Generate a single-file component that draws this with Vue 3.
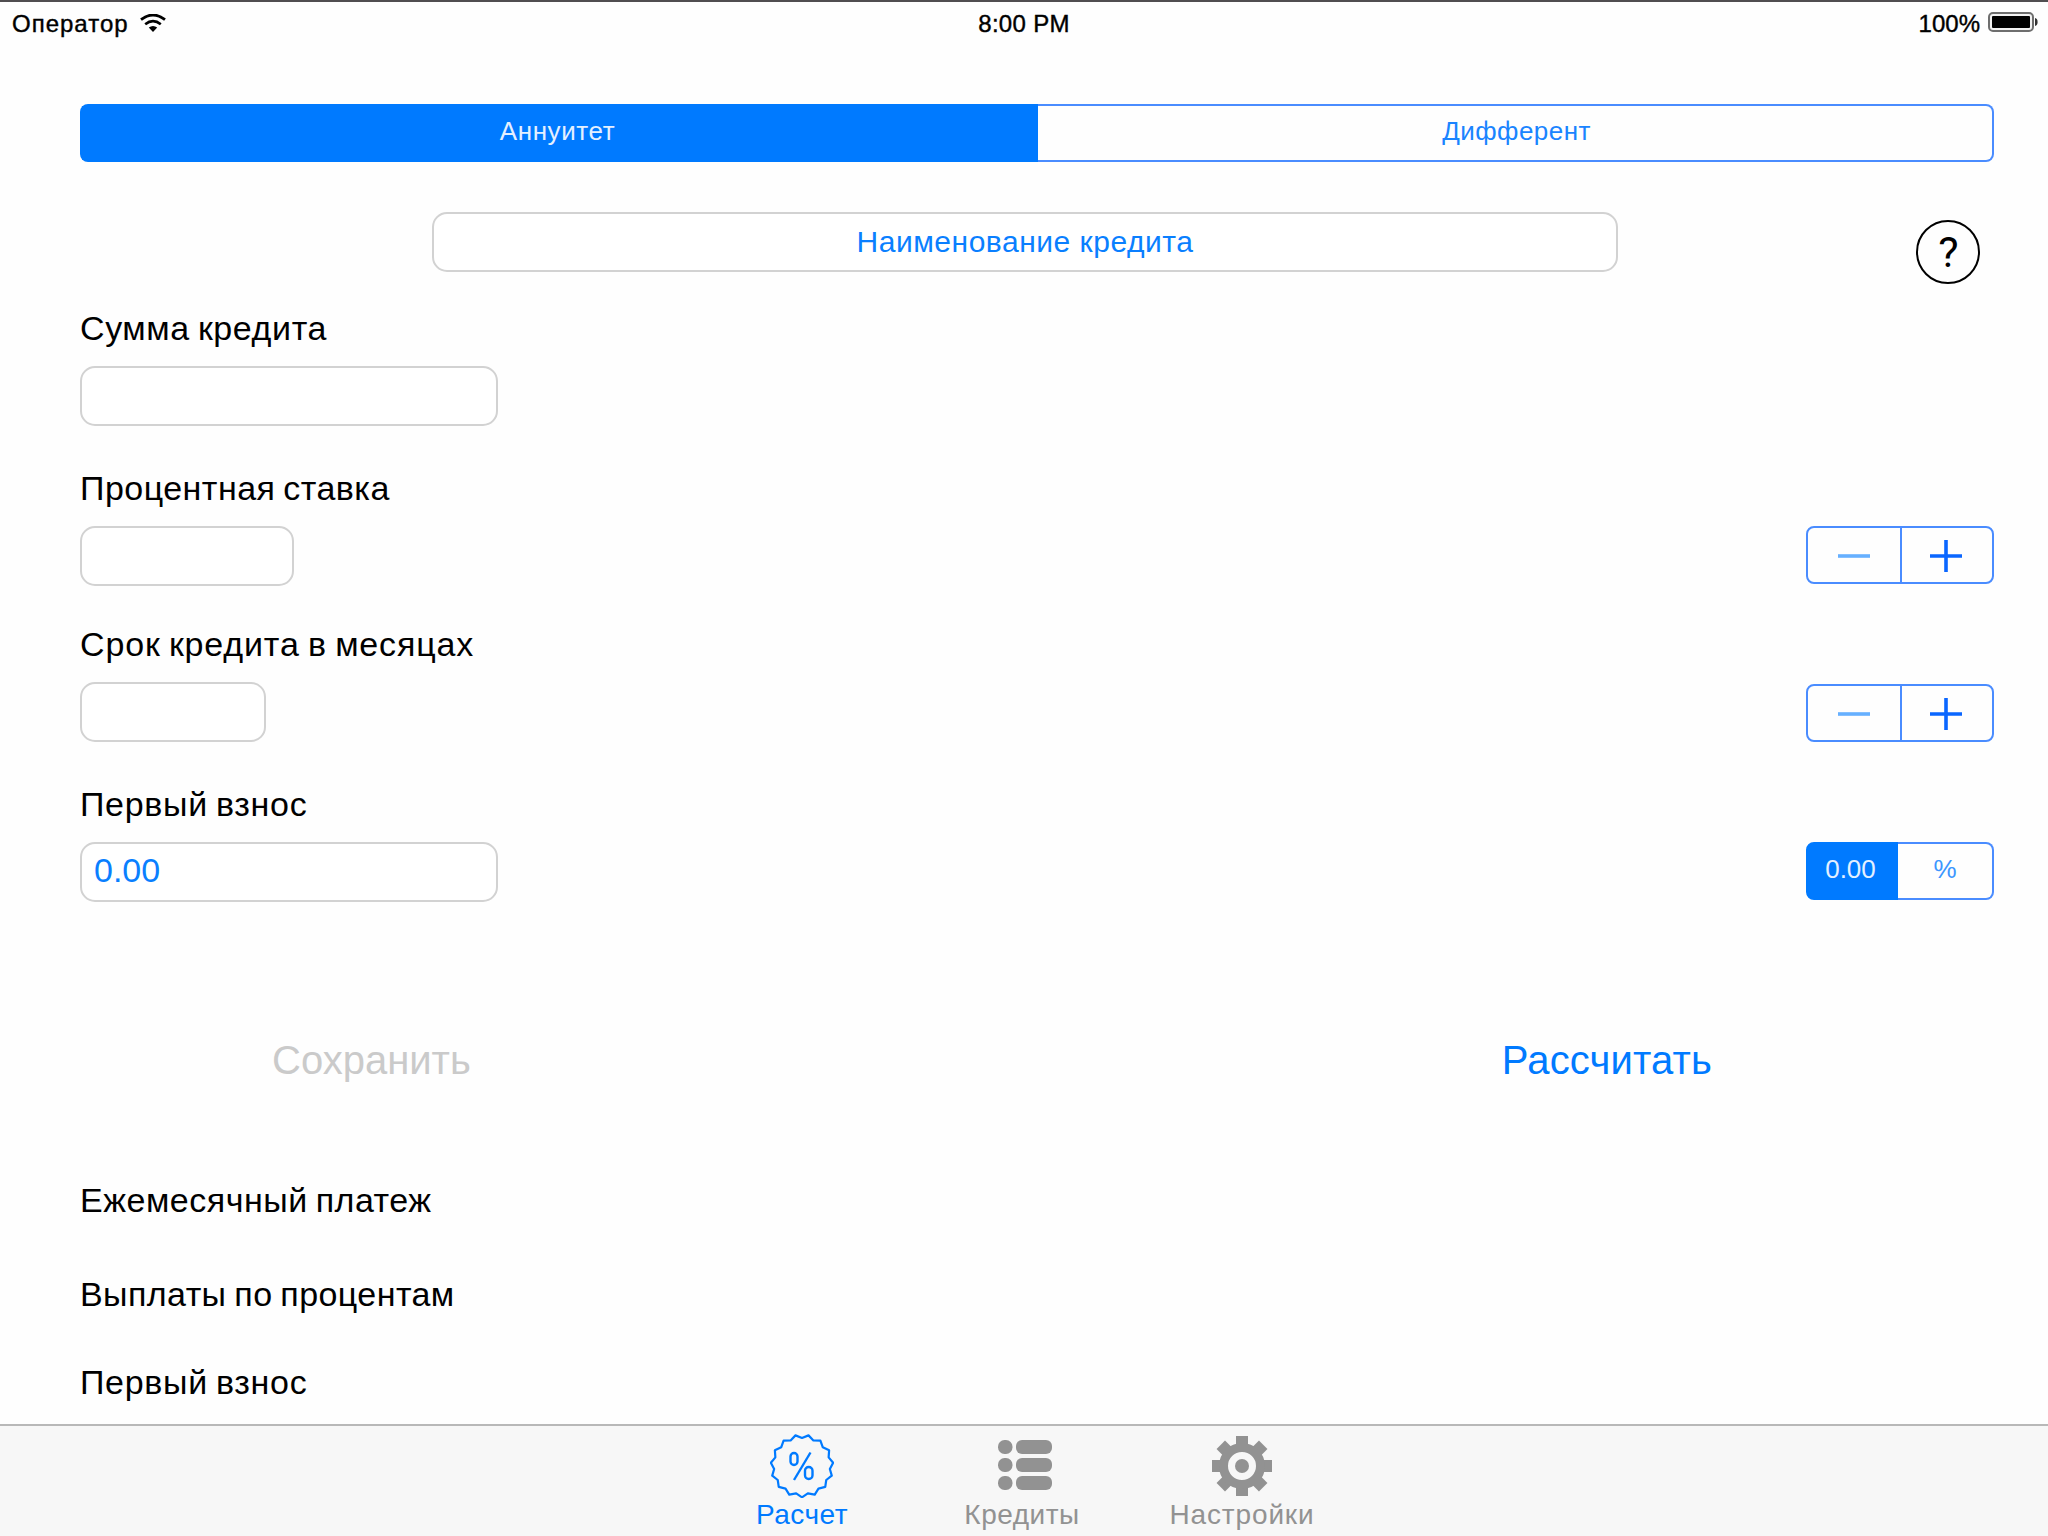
<script setup>
import { ref } from 'vue'

const rows = [
  { id: 'sum', label: 'Сумма кредита', value: '', control: null },
  { id: 'rate', label: 'Процентная ставка', value: '', control: 'stepper' },
  { id: 'term', label: 'Срок кредита в месяцах', value: '', control: 'stepper' },
  { id: 'down', label: 'Первый взнос', value: '0.00', control: 'segment' }
]

const results = [
  { id: 'monthly', label: 'Ежемесячный платеж' },
  { id: 'interest', label: 'Выплаты по процентам' },
  { id: 'first', label: 'Первый взнос' }
]

const mode = ref('annuity')

// Scalloped badge outline: 15 lobes with a notch at the top
const badge = Array.from({ length: 30 }, (_, i) => {
  const a = (-90 + i * 12) * Math.PI / 180
  const r = i % 2 ? 31.3 : 28
  return `${(32 + r * Math.cos(a)).toFixed(2)},${(32 + r * Math.sin(a)).toFixed(2)}`
}).join(' ')

const teeth = [0, 45, 90, 135, 180, 225, 270, 315]
</script>

<template>
  <div class="screen">
    <header class="status">
      <div class="carrier">
        <span class="carrier-name">Оператор</span>
        <svg class="wifi" width="26" height="18" viewBox="0 0 26 18">
          <path d="M1 5.6Q13 -3.6 25 5.6" fill="none" stroke="#000" stroke-width="2.8" />
          <path d="M5.2 10.2Q13 4 20.8 10.2" fill="none" stroke="#000" stroke-width="2.6" />
          <path d="M8.8 13.6Q13 10.2 17.2 13.6L13 18Z" />
        </svg>
      </div>
      <span class="time">8:00 PM</span>
      <div class="power">
        <span class="percent">100%</span>
        <svg width="50" height="20" viewBox="0 0 50 20">
          <rect x="1" y="1" width="44" height="18" rx="4" fill="#f2f2f2" stroke="#6e6e6e" stroke-width="2" />
          <rect x="4" y="4" width="38" height="12" rx="1" />
          <path d="M47 6Q49.6 6.400 49.600 10Q49.600 13.600 47 14Z" fill="#333" />
        </svg>
      </div>
    </header>

    <main class="form">
      <div class="modes">
        <button class="mode annuity" :class="{ on: mode === 'annuity' }" @click="mode = 'annuity'">Аннуитет</button>
        <button class="mode diff" :class="{ on: mode === 'diff' }" @click="mode = 'diff'">Дифферент</button>
      </div>

      <div class="name-row">
        <div class="field name"><span>Наименование кредита</span></div>
        <svg class="help" width="64" height="64" viewBox="0 0 64 64">
          <circle cx="32" cy="32" r="31" fill="none" stroke="#000" stroke-width="2" />
          <text x="32.500" y="47" text-anchor="middle" font-family="Roboto, sans-serif" font-size="43">?</text>
        </svg>
      </div>

      <section v-for="row in rows" :key="row.id" class="row" :class="row.id">
        <label class="label"><span>{{ row.label }}</span></label>
        <div class="line">
          <div class="field"><span>{{ row.value }}</span></div>
          <svg v-if="row.control === 'stepper'" width="188" height="58" viewBox="0 0 188 58" fill="none">
            <rect x="1" y="1" width="186" height="56" rx="7" stroke="#4a8cff" stroke-width="2" />
            <path d="M95 1V57" stroke="#4a8cff" stroke-width="2" />
            <path d="M32 30H64" stroke="#66b0ff" stroke-width="3.600" />
            <path d="M124 30H156M140 14V46" stroke="#0a66ff" stroke-width="3.600" />
          </svg>
          <div v-if="row.control === 'segment'" class="unit">
            <span class="money">0.00</span>
            <span class="pct">%</span>
          </div>
        </div>
      </section>

      <div class="actions">
        <span class="save">Сохранить</span>
        <span class="calc">Рассчитать</span>
      </div>

      <div v-for="r in results" :key="r.id" class="label result" :class="'r-' + r.id"><span>{{ r.label }}</span></div>
    </main>

    <nav class="tabs">
      <div class="tab active">
        <svg width="64" height="64" viewBox="0 0 64 64" fill="none" stroke="#007aff">
          <polygon :points="badge" stroke-width="2.200" stroke-linejoin="round" />
          <rect x="20.500" y="19" width="7" height="12" rx="3.500" stroke-width="2.400" />
          <rect x="35" y="33" width="7.500" height="12" rx="3.700" stroke-width="2.400" />
          <path d="M40.500 18.500L24 46" stroke-width="2.400" />
        </svg>
        <span class="tab-text">Расчет</span>
      </div>
      <div class="tab loans">
        <svg width="54" height="64" viewBox="0 0 54 64" fill="#929292">
          <template v-for="y in [6, 24, 42]" :key="y">
            <rect x="0" :y="y" width="14.500" height="14" rx="6.500" />
            <rect x="18" :y="y" width="36" height="14" rx="6" />
          </template>
        </svg>
        <span class="tab-text">Кредиты</span>
      </div>
      <div class="tab">
        <svg width="60" height="64" viewBox="0 0 60 64" fill="#929292">
          <rect v-for="a in teeth" :key="a" x="24" y="2" width="12" height="14" :transform="`rotate(${a} 30 32)`" />
          <circle cx="30" cy="32" r="18.500" stroke="#929292" stroke-width="9" fill="none" />
          <circle cx="30" cy="32" r="7" />
        </svg>
        <span class="tab-text settings">Настройки</span>
      </div>
    </nav>
  </div>
</template>

<style>
body { background: #fff; }
</style>

<style scoped>
.screen {
  box-sizing: border-box;
  width: 2048px;
  height: 1536px;
  overflow: hidden;
  display: flex;
  flex-direction: column;
  background: #fefefe;
  color: #000;
  font-family: "Liberation Sans", Arial, sans-serif;
  white-space: nowrap;
}
.status {
  box-sizing: border-box;
  height: 104px;
  flex: none;
  border-top: 2px solid #504e50;
  padding: 8px 14px 0 12px;
  display: grid;
  grid-template-columns: 1fr auto 1fr;
  align-items: start;
  font-size: 24px;
  line-height: 28px;
  -webkit-text-stroke: 0.4px #000;
}
.carrier, .power { display: flex; }
.carrier { gap: 11px; }
.carrier-name { letter-spacing: 1px; }
.time { letter-spacing: 0.3px; padding-left: 2px; }
.wifi { margin-top: 4px; }
.power { justify-content: flex-end; gap: 8px; margin-right: -4px; }
.power svg { margin-top: 2px; }
.form { flex: 1; min-height: 0; padding: 0 54px 0 80px; }
.modes { display: flex; height: 58px; }
.mode {
  box-sizing: border-box;
  flex: 1;
  padding: 0 0 4px;
  border: 2px solid #4a8cff;
  background: transparent;
  color: #1a84ff;
  font: 26px/50px "Liberation Sans", Arial, sans-serif;
}
.annuity { border-right: 0; border-radius: 8px 0 0 8px; letter-spacing: 0.6px; padding-right: 5px; }
.diff { border-left: 0; border-radius: 0 8px 8px 0; letter-spacing: 0.45px; padding-left: 3px; }
.mode.on { background: #007aff; border-color: #007aff; color: #e4f0ff; }
.name-row { display: flex; align-items: flex-start; height: 72px; margin-top: 50px; }
.field {
  box-sizing: border-box;
  height: 60px;
  border: 2px solid #d2d2d2;
  border-radius: 15px;
  color: #0a7fff;
  background: #fff;
}
.name {
  width: 1186px;
  margin-left: 352px;
  text-align: center;
  font-size: 30px;
  line-height: 56px;
  letter-spacing: 0.52px;
}
.help { margin: 8px 14px 0 auto; }
.row { margin-top: 42px; }
.row.sum { margin-top: 24px; }
.row.term { margin-top: 38px; }
.label { display: block; height: 40px; font-size: 34px; line-height: 40px; letter-spacing: 0.68px; word-spacing: -2px; }
.sum .label { letter-spacing: 0.6px; }
.rate .label { letter-spacing: 0.47px; }
.term .label { letter-spacing: 0.84px; }
.line { display: flex; justify-content: space-between; height: 60px; margin-top: 18px; }
.line .field { width: 418px; padding-left: 12px; font-size: 34px; line-height: 52px; }
.rate .line .field { width: 214px; }
.term .line .field { width: 186px; }
.term svg { margin-top: 2px; }
.unit {
  display: flex;
  width: 188px;
  height: 58px;
  font-size: 26px;
  line-height: 50px;
  text-align: center;
}
.unit span { box-sizing: border-box; border: 2px solid #4a8cff; }
.unit .money {
  width: 92px;
  background: #007aff;
  border-color: #007aff;
  border-radius: 8px 0 0 8px;
  color: #e4f0ff;
  padding-right: 3px;
}
.unit .pct { flex: 1; border-left: 0; border-radius: 0 8px 8px 0; color: #3c96ff; }
.actions {
  display: flex;
  justify-content: space-between;
  margin: 134px 282px 0 192px;
  height: 48px;
  font-size: 40px;
  line-height: 48px;
}
.save { color: #cacaca; }
.calc { color: #007aff; letter-spacing: 0.15px; }
.result { margin-top: 48px; }
.r-monthly { margin-top: 96px; letter-spacing: 0.52px; }
.r-interest { margin-top: 54px; letter-spacing: 0.42px; }
.tabs {
  box-sizing: border-box;
  flex: none;
  height: 112px;
  border-top: 2px solid #b8b8b8;
  background: #f7f7f7;
  display: flex;
  justify-content: center;
  padding: 8px 4px 0 0;
}
.tab {
  width: 220px;
  display: flex;
  flex-direction: column;
  align-items: center;
  font-size: 28px;
  line-height: 34px;
  letter-spacing: 0.5px;
  color: #929292;
}
.tab.active { color: #007aff; }
.loans svg { margin-left: 6px; }
.settings { letter-spacing: 0.85px; }
</style>
